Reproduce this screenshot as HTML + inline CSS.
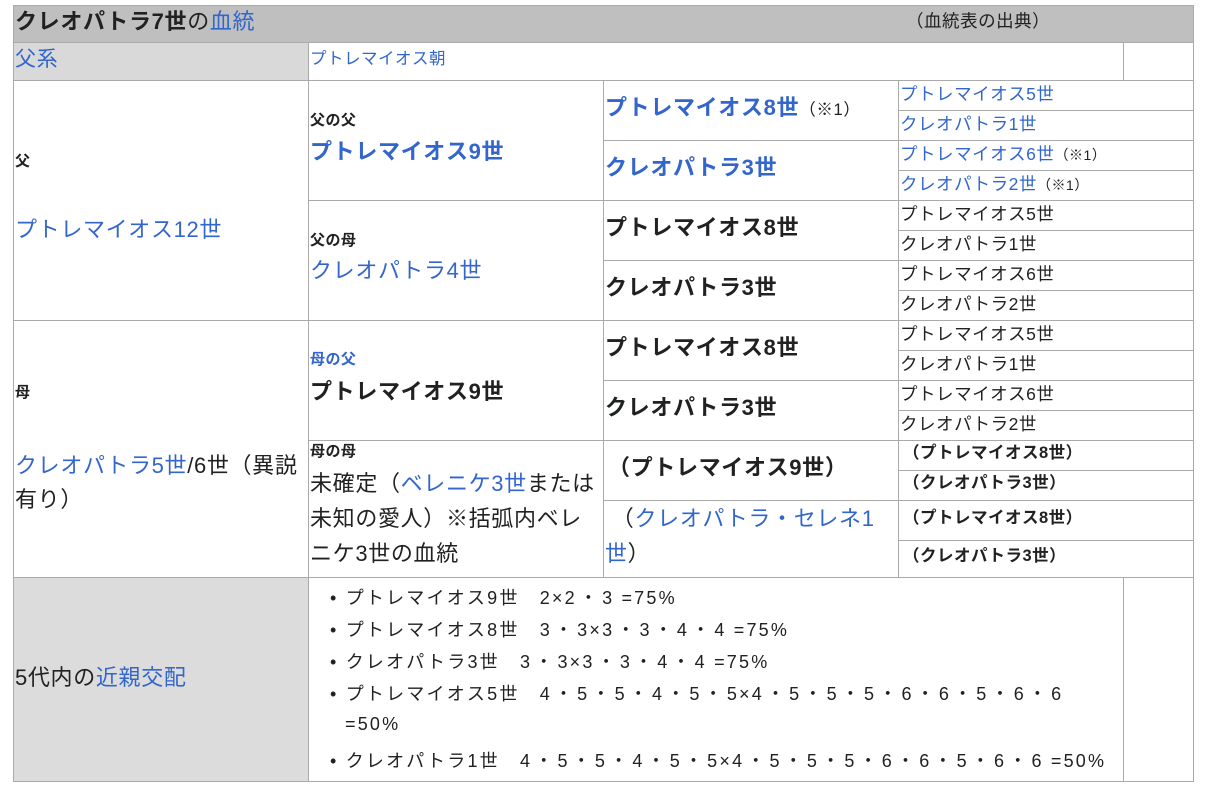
<!DOCTYPE html>
<html><head><meta charset="utf-8"><style>
body{margin:0;width:1212px;height:785px;background:#fff;position:relative;overflow:hidden;font-family:"Liberation Sans","Noto Sans CJK JP",sans-serif;color:#202122}
div{position:absolute}
.h{height:1px;background:#aaa}
.v{width:1px;background:#aaa}
.t{white-space:nowrap;line-height:1;letter-spacing:0.03em}
.b{font-weight:bold}
.l{color:#3366cc}
.li{letter-spacing:2.2px;font-size:18px}
.li i{font-style:normal;margin:0 2.5px}
.L{font-size:22px}
.S{font-size:17.5px}
</style></head><body>
<div style="left:13px;top:5px;width:1180px;height:37px;background:#bfbfbf"></div>
<div style="left:13px;top:42px;width:295px;height:38px;background:#d9d9d9"></div>
<div style="left:13px;top:577px;width:295px;height:204px;background:#dcdcdc"></div>
<div class="h" style="left:13px;top:5px;width:1181px"></div>
<div class="h" style="left:13px;top:42px;width:1181px"></div>
<div class="h" style="left:13px;top:80px;width:1181px"></div>
<div class="h" style="left:13px;top:320px;width:1181px"></div>
<div class="h" style="left:13px;top:577px;width:1181px"></div>
<div class="h" style="left:13px;top:781px;width:1181px"></div>
<div class="h" style="left:308px;top:200px;width:886px"></div>
<div class="h" style="left:308px;top:440px;width:886px"></div>
<div class="h" style="left:603px;top:140px;width:591px"></div>
<div class="h" style="left:603px;top:260px;width:591px"></div>
<div class="h" style="left:603px;top:380px;width:591px"></div>
<div class="h" style="left:603px;top:500px;width:591px"></div>
<div class="h" style="left:898px;top:110px;width:296px"></div>
<div class="h" style="left:898px;top:170px;width:296px"></div>
<div class="h" style="left:898px;top:230px;width:296px"></div>
<div class="h" style="left:898px;top:290px;width:296px"></div>
<div class="h" style="left:898px;top:350px;width:296px"></div>
<div class="h" style="left:898px;top:410px;width:296px"></div>
<div class="h" style="left:898px;top:470px;width:296px"></div>
<div class="h" style="left:898px;top:540px;width:296px"></div>
<div class="v" style="left:13px;top:5px;height:777px"></div>
<div class="v" style="left:1193px;top:5px;height:777px"></div>
<div class="v" style="left:308px;top:42px;height:740px"></div>
<div class="v" style="left:1123px;top:42px;height:38px"></div>
<div class="v" style="left:1123px;top:577px;height:204px"></div>
<div class="v" style="left:603px;top:80px;height:497px"></div>
<div class="v" style="left:898px;top:80px;height:497px"></div>

<div class="t b L" style="left:15px;top:11px">クレオパトラ7世<span style="font-weight:normal">の</span><span class="l" style="font-weight:normal">血統</span></div>
<div class="t S" style="left:906px;top:13px">（血統表の出典）</div>
<div class="t l" style="left:15px;top:49px;font-size:21px">父系</div>
<div class="t l" style="left:310px;top:51px;font-size:16.5px">プトレマイオス朝</div>

<div class="t b" style="left:15px;top:154px;font-size:15px">父</div>
<div class="t l L" style="left:15px;top:219px">プトレマイオス12世</div>
<div class="t b" style="left:310px;top:113px;font-size:15px">父の父</div>
<div class="t b l L" style="left:310px;top:141px">プトレマイオス9世</div>
<div class="t b" style="left:310px;top:233px;font-size:15px">父の母</div>
<div class="t l L" style="left:310px;top:260px">クレオパトラ4世</div>

<div class="t L" style="left:605px;top:97px"><span class="b l">プトレマイオス8世</span><span style="font-size:16.5px">（※1）</span></div>
<div class="t b l L" style="left:605px;top:157px">クレオパトラ3世</div>
<div class="t b L" style="left:605px;top:217px">プトレマイオス8世</div>
<div class="t b L" style="left:605px;top:277px">クレオパトラ3世</div>
<div class="t b L" style="left:605px;top:337px">プトレマイオス8世</div>
<div class="t b L" style="left:605px;top:397px">クレオパトラ3世</div>

<div class="t l S" style="left:900px;top:86px">プトレマイオス5世</div>
<div class="t l S" style="left:900px;top:116px">クレオパトラ1世</div>
<div class="t S" style="left:900px;top:146px"><span class="l">プトレマイオス6世</span><span style="font-size:14px">（※1）</span></div>
<div class="t S" style="left:900px;top:176px"><span class="l">クレオパトラ2世</span><span style="font-size:14px">（※1）</span></div>
<div class="t S" style="left:900px;top:206px">プトレマイオス5世</div>
<div class="t S" style="left:900px;top:236px">クレオパトラ1世</div>
<div class="t S" style="left:900px;top:266px">プトレマイオス6世</div>
<div class="t S" style="left:900px;top:296px">クレオパトラ2世</div>
<div class="t S" style="left:900px;top:326px">プトレマイオス5世</div>
<div class="t S" style="left:900px;top:356px">クレオパトラ1世</div>
<div class="t S" style="left:900px;top:386px">プトレマイオス6世</div>
<div class="t S" style="left:900px;top:416px">クレオパトラ2世</div>

<div class="t b" style="left:15px;top:385px;font-size:15px">母</div>
<div class="t L" style="left:15px;top:449px;line-height:34px"><span class="l">クレオパトラ5世</span>/6世（異説<br>有り）</div>
<div class="t b l" style="left:310px;top:352px;font-size:15px">母の父</div>
<div class="t b L" style="left:310px;top:381px">プトレマイオス9世</div>
<div class="t b" style="left:310px;top:444px;font-size:15px">母の母</div>
<div class="t L" style="left:310px;top:466px;line-height:35px">未確定（<span class="l">ベレニケ3世</span>または<br>未知の愛人）※括弧内ベレ<br>ニケ3世の血統</div>

<div class="t b L" style="left:608px;top:457px">（プトレマイオス9世）</div>
<div class="t L" style="left:605px;top:501px;line-height:35px">&nbsp;（<span class="l">クレオパトラ・セレネ1<br>世</span>）</div>
<div class="t b" style="left:903px;top:445px;font-size:16.5px">（プトレマイオス8世）</div>
<div class="t b" style="left:903px;top:475px;font-size:16.5px">（クレオパトラ3世）</div>
<div class="t b" style="left:903px;top:510px;font-size:16.5px">（プトレマイオス8世）</div>
<div class="t b" style="left:903px;top:548px;font-size:16.5px">（クレオパトラ3世）</div>

<div class="t L" style="left:15px;top:667px">5代内の<span class="l">近親交配</span></div>
<div class="t li" style="left:330px;top:589px">• プトレマイオス9世　2×2<i>・</i>3 =75%</div>
<div class="t li" style="left:330px;top:621px">• プトレマイオス8世　3<i>・</i>3×3<i>・</i>3<i>・</i>4<i>・</i>4 =75%</div>
<div class="t li" style="left:330px;top:653px">• クレオパトラ3世　3<i>・</i>3×3<i>・</i>3<i>・</i>4<i>・</i>4 =75%</div>
<div class="t li" style="left:330px;top:685px">• プトレマイオス5世　4<i>・</i>5<i>・</i>5<i>・</i>4<i>・</i>5<i>・</i>5×4<i>・</i>5<i>・</i>5<i>・</i>5<i>・</i>6<i>・</i>6<i>・</i>5<i>・</i>6<i>・</i>6</div>
<div class="t li" style="left:345px;top:715px">=50%</div>
<div class="t li" style="left:330px;top:752px">• クレオパトラ1世　4<i>・</i>5<i>・</i>5<i>・</i>4<i>・</i>5<i>・</i>5×4<i>・</i>5<i>・</i>5<i>・</i>5<i>・</i>6<i>・</i>6<i>・</i>5<i>・</i>6<i>・</i>6 =50%</div>
</body></html>
